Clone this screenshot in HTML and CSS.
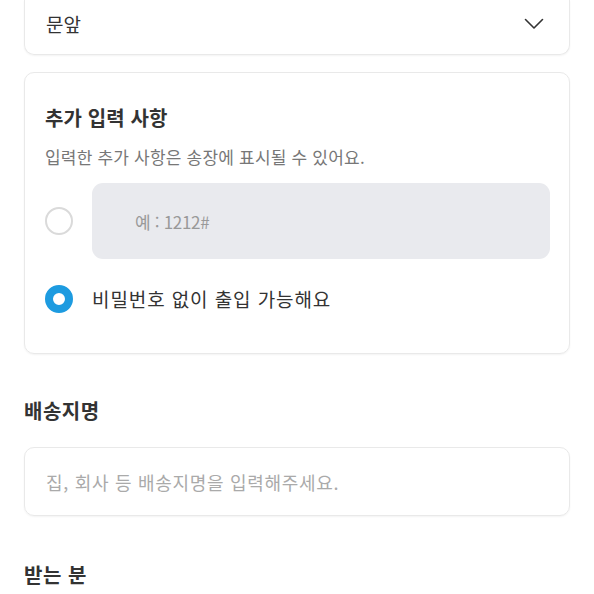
FILE: index.html
```html
<!DOCTYPE html>
<html lang="ko">

<head>
    <title>배송지 입력</title>
    <meta charset="UTF-8">
    <meta name="viewport" content="width=device-width, initial-scale=1.0">
    <link rel="stylesheet" href="styles.css">
</head>

<body>
    <main class="page">
        <div class="select-box">
            <span class="select-value">문앞</span>
            <svg class="chevron" width="20" height="12" viewBox="0 0 20 12">
                <path d="M1.5 1.5 L10 10 L18.5 1.5" fill="none" stroke="#333" stroke-width="1.6" stroke-linecap="round" stroke-linejoin="round" />
            </svg>
        </div>

        <section class="extra-card">
            <h2 class="card-title">추가 입력 사항</h2>
            <p class="card-desc">입력한 추가 사항은 송장에 표시될 수 있어요.</p>
            <div class="option-row">
                <span class="radio"></span>
                <div class="gray-input">예 : 1212#</div>
            </div>
            <div class="option-row option-text">
                <span class="radio radio-on"></span>
                <span class="option-label">비밀번호 없이 출입 가능해요</span>
            </div>
        </section>

        <h3 class="field-label">배송지명</h3>
        <div class="text-input">집, 회사 등 배송지명을 입력해주세요.</div>

        <h3 class="field-label label-receiver">받는 분</h3>
    </main>
</body>

</html>
```

FILE: styles.css
```css
body {
    font-family: "Noto Sans CJK KR", "Noto Sans", sans-serif;
    margin: 0;
    padding: 0;
    background-color: #fff;
    color: #333;
    overflow: hidden;
}

.page {
    padding: 0 24px;
}

.select-box {
    height: 55px;
    box-sizing: border-box;
    border: 1px solid #e9e9e9;
    border-top: none;
    border-radius: 0 0 10px 10px;
    box-shadow: 0 1px 2px rgba(0, 0, 0, 0.05);
    display: flex;
    align-items: center;
    justify-content: space-between;
    padding: 0 25px 7px 21px;
}

.select-value {
    font-size: 19px;
    line-height: 26px;
}

.chevron {
    display: block;
}

.extra-card {
    margin-top: 17px;
    height: 282px;
    box-sizing: border-box;
    border: 1px solid #e9e9e9;
    border-radius: 10px;
    box-shadow: 0 1px 2px rgba(0, 0, 0, 0.05);
    padding: 32px 19px 0 20px;
}

.card-title {
    margin: 0;
    font-size: 20px;
    line-height: 26px;
    font-weight: 700;
    letter-spacing: 0.1px;
    color: #333;
}

.card-desc {
    margin: 14px 0 0;
    font-size: 17px;
    line-height: 24px;
    color: #777;
    letter-spacing: 0.2px;
}

.option-row {
    display: flex;
    align-items: center;
    gap: 19px;
    margin-top: 14px;
}

.option-text {
    margin-top: 26px;
    height: 28px;
}

.radio {
    width: 28px;
    height: 28px;
    box-sizing: border-box;
    border: 2px solid #dadada;
    border-radius: 50%;
    flex-shrink: 0;
}

.radio-on {
    border: 8px solid #1d9be0;
}

.gray-input {
    flex: 1;
    height: 76px;
    box-sizing: border-box;
    background-color: #e9eaee;
    border-radius: 11px;
    display: flex;
    align-items: center;
    padding-left: 43px;
    font-size: 17px;
    color: #999;
    letter-spacing: -0.3px;
}

.option-label {
    font-size: 19px;
    line-height: 28px;
    letter-spacing: 0.9px;
}

.field-label {
    margin: 44px 0 0;
    font-size: 20px;
    line-height: 26px;
    font-weight: 700;
    letter-spacing: 0.5px;
    color: #333;
}

.text-input {
    margin-top: 23px;
    height: 69px;
    box-sizing: border-box;
    border: 1px solid #e9e9e9;
    border-radius: 10px;
    box-shadow: 0 1px 2px rgba(0, 0, 0, 0.05);
    display: flex;
    align-items: center;
    padding-left: 21px;
    font-size: 18px;
    color: #aaa;
    letter-spacing: 0.7px;
}

.label-receiver {
    margin-top: 46px;
}
```
